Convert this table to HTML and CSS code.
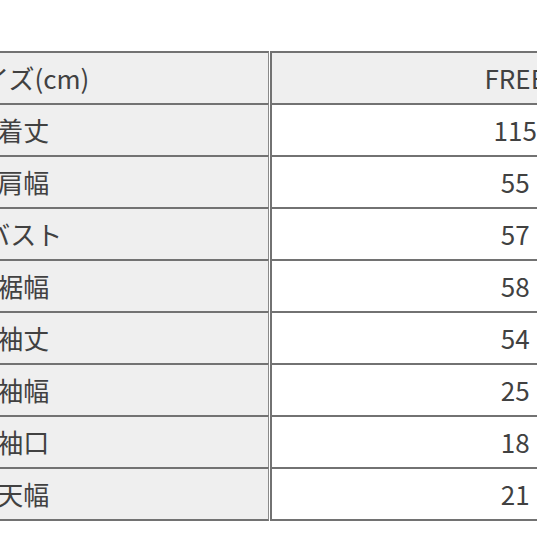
FILE: index.html
```html
<!DOCTYPE html>
<html lang="ja">
<head>
<meta charset="utf-8">
<link rel="stylesheet" href="styles.css">
</head>
<body>
<div class="wrap">
<table class="size-table">
  <tr class="head"><th class="label">サイズ(cm)</th><th class="value">FREE</th></tr>
  <tr><td class="label">着丈</td><td class="value">115</td></tr>
  <tr><td class="label">肩幅</td><td class="value">55</td></tr>
  <tr><td class="label">バスト</td><td class="value">57</td></tr>
  <tr><td class="label">裾幅</td><td class="value">58</td></tr>
  <tr><td class="label">袖丈</td><td class="value">54</td></tr>
  <tr><td class="label">袖幅</td><td class="value">25</td></tr>
  <tr><td class="label">袖口</td><td class="value">18</td></tr>
  <tr class="last"><td class="label">天幅</td><td class="value">21</td></tr>
</table>
</div>
</body>
</html>
```
FILE: styles.css
```css
html, body {
  margin: 0;
  padding: 0;
  background: #ffffff;
  overflow: hidden;
}
.wrap {
  width: 537px;
  height: 537px;
  overflow: hidden;
  padding-top: 51px;
  box-sizing: border-box;
}
.size-table {
  margin-left: -222px;
  width: 982px;
  table-layout: fixed;
  border-collapse: separate;
  border-spacing: 1px 0;
  font-family: "Noto Sans CJK JP", "Noto Sans", sans-serif;
  font-size: 26px;
  color: #414141;
}
.size-table th,
.size-table td {
  height: 50px;
  padding: 0;
  text-align: center;
  vertical-align: middle;
  font-weight: normal;
  border-top: 2px solid #727272;
  line-height: 1;
}
.size-table .last td {
  border-bottom: 2px solid #727272;
}
.size-table .label {
  background: #efefef;
  border-right: 1px solid #8a8a8a;
}
.size-table .value {
  background: #ffffff;
  border-left: 2px solid #727272;
}
.size-table .head .value {
  background: #efefef;
}
```
